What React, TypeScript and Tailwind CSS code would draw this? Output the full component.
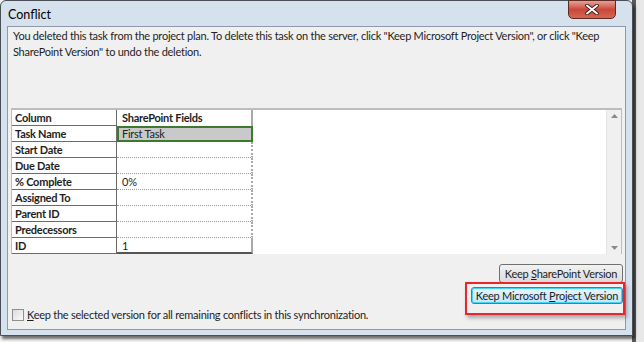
import React from 'react';

const rows = [
  { name: 'Task Name', value: 'First Task', selected: true },
  { name: 'Start Date', value: '' },
  { name: 'Due Date', value: '' },
  { name: '% Complete', value: '0%' },
  { name: 'Assigned To', value: '' },
  { name: 'Parent ID', value: '' },
  { name: 'Predecessors', value: '' },
  { name: 'ID', value: '1' },
];

const ConflictDialog = () => {
  return (
    <div className="relative w-[644px] h-[342px] overflow-hidden bg-[#f4f4f4] text-[11px] tracking-[-0.25px] text-[#1e1e1e] font-['Lato',sans-serif]">
      {/* background window strip on the right */}
      <div className="absolute right-0 top-0 w-[12px] h-full bg-[#e8e8e8] border-l-[4px] border-[#5b5b5b]" />
      <div className="relative w-[633px] h-[336px] flex flex-col rounded-t-[6px] border border-[#4a4f57] bg-[#d6e1ee] shadow-[2px_3px_3px_rgba(0,0,0,0.55)]">
        {/* title bar */}
        <div className="h-[25px] flex items-center pl-[7px] pt-[4px] text-[12.5px] tracking-normal text-black">Conflict</div>
        <div className="absolute top-[-1px] right-[16px] w-[48px] h-[19px] rounded-b-[5px] border border-[#5e2a24] bg-gradient-to-b from-[#e5a095] via-[#c9473a] to-[#d8654f] flex items-center justify-center">
          <svg width="14" height="11" viewBox="0 0 14 11">
            <path d="M2 1.5 L12 9.5 M12 1.5 L2 9.5" stroke="#3b1a16" strokeWidth="3.6" strokeLinecap="round" />
            <path d="M2 1.5 L12 9.5 M12 1.5 L2 9.5" stroke="#ffffff" strokeWidth="2" strokeLinecap="round" />
          </svg>
        </div>

        {/* client area */}
        <div className="flex-1 mx-[6px] mb-[5px] flex flex-col border border-[#8e9aab] bg-[#f0f0f0]">
          <p className="pl-[5px] pt-[1px] pr-[10px] leading-[16px]">
            You deleted this task from the project plan. To delete this task on the server, click "Keep Microsoft Project Version", or click "Keep SharePoint Version" to undo the deletion.
          </p>

          {/* grid */}
          <div className="mt-[48px] mx-[3px] h-[146px] flex border-t-[2px] border-l border-[#bdbdbd] border-r border-b-0 bg-white">
            <div className="flex flex-col w-[241px]">
              <div className="flex h-[16px]">
                <div className="w-[105px] pl-[3px] border-b border-r border-[#6c6c6c] font-bold leading-[15px]">Column</div>
                <div className="flex-1 pl-[5px] border-r-[2px] border-[#a8a8a8] font-bold leading-[15px]">SharePoint Fields</div>
              </div>
              {rows.map((r, i) => (
                <div key={r.name} className="flex h-[16px]">
                  <div className="w-[105px] pl-[3px] border-b border-r border-[#6c6c6c] font-bold leading-[15px]">{r.name}</div>
                  {r.selected ? (
                    <div className="flex-1 pl-[3px] bg-[#c9c9c9] border-2 border-[#3d7a30] border-r-[2px] leading-[12px] text-[#222]">{r.value}</div>
                  ) : (
                    <div
                      className={`flex-1 pl-[5px] border-r-[2px] border-[#a8a8a8] leading-[15px] ${
                        i === rows.length - 1 ? 'border-b-[2px] border-b-[#555555]' : 'border-b border-b-[#a0a0a0] border-dotted'
                      }`}
                    >
                      {r.value}
                    </div>
                  )}
                </div>
              ))}
            </div>
            <div className="flex-1" />
            <div className="w-[15px] bg-[#f0f0f0] border-l border-[#e4e4e4] flex flex-col items-center justify-between py-[4px]">
              <svg width="7" height="4" viewBox="0 0 7 4"><path d="M0 4 L3.5 0 L7 4 Z" fill="#8a8a8a" /></svg>
              <svg width="7" height="4" viewBox="0 0 7 4"><path d="M0 0 L3.5 4 L7 0 Z" fill="#8a8a8a" /></svg>
            </div>
          </div>

          {/* buttons */}
          <div className="mt-[10px] pr-[2px] flex flex-col items-end gap-[4px]">
            <button className="w-[124px] h-[19px] rounded-[3px] border border-[#707070] bg-gradient-to-b from-[#f2f2f2] to-[#dcdcdc] leading-[16px] whitespace-nowrap">
              Keep <span className="underline">S</span>harePoint Version
            </button>
            <button className="relative w-[152px] h-[17px] rounded-[3px] border border-[#3c7fb1] bg-gradient-to-b from-[#eaf6fd] to-[#bee6fd] shadow-[inset_0_0_0_1px_#48d4f5] leading-[14px] whitespace-nowrap">
              Keep Microsoft <span className="underline">P</span>roject Version
              <span className="absolute left-[-7px] top-[-6px] w-[160px] h-[33px] border-2 border-[#e8262b] shadow-[2px_3px_4px_rgba(0,0,0,0.3)]" />
            </button>
          </div>

          {/* checkbox */}
          <label className="mt-[4px] pl-[4px] flex items-center gap-[3px] h-[14px]">
            <span className="w-[12px] h-[12px] border border-[#8e8f8f] bg-gradient-to-br from-[#dcdcdc] to-[#fafafa]" />
            <span><span className="underline">K</span>eep the selected version for all remaining conflicts in this synchronization.</span>
          </label>
        </div>
      </div>
    </div>
  );
};

export default function App() {
  return <ConflictDialog />;
}
